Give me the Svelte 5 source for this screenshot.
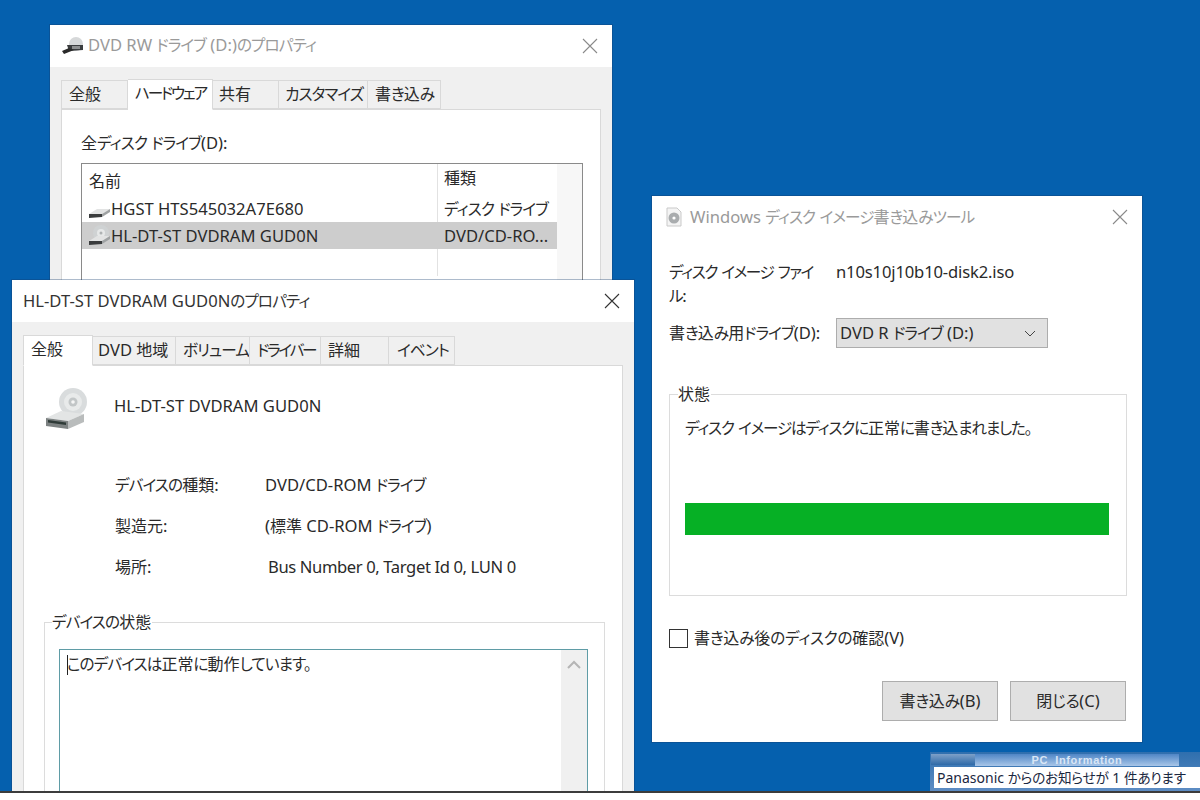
<script>
  const tabs1 = [
    { label: '全般', w: 67, pad: 7 },
    { label: 'ハードウェア', w: 85, pad: 7, tight: true },
    { label: '共有', w: 66, pad: 6 },
    { label: 'カスタマイズ', w: 89, pad: 6 },
    { label: '書き込み', w: 73, pad: 7 }
  ];
  const tabs2 = [
    { label: '全般', w: 70, pad: 7 },
    { label: 'DVD 地域', w: 83, pad: 5 },
    { label: 'ボリューム', w: 74, pad: 7 },
    { label: 'ドライバー', w: 71, pad: 7, tight: true },
    { label: '詳細', w: 68, pad: 7 },
    { label: 'イベント', w: 66, pad: 8 }
  ];

  // Split a mixed string so that Latin, kana and kanji runs can be sized apart.
  function runs(text) {
    return text.match(/[\x00-\x7f]+|[\u4e00-\u9fff]+|[^\x00-\x7f\u4e00-\u9fff]+/g) ?? [];
  }
  function runClass(run) {
    const code = run.charCodeAt(0);
    if (code < 128) return 'la';
    return code >= 0x4e00 && code <= 0x9fff ? 'kj' : 'kn';
  }
</script>

{#snippet txt(s)}
  {#each runs(s) as r}<span class={runClass(r)}>{r}</span>{/each}
{/snippet}

{#snippet bigDrive()}
  <svg class="ico" width="46" height="46" viewBox="0 0 46 46" aria-hidden="true">
    <circle cx="29" cy="15" r="14" fill="#d9dcdd" />
    <circle cx="29" cy="15" r="9" fill="#e8eaea" />
    <circle cx="29" cy="15" r="4.5" fill="#c2c6c7" />
    <circle cx="29" cy="15" r="1.8" fill="#f6f6f6" />
    <path d="M2 31 L17 24 L40 27 L24 34 Z" fill="#e3e5e5" />
    <path d="M2 31 L24 34 V42 L2 39 Z" fill="#7d8282" />
    <path d="M4 33 L22 35.5 V38 L4 35.5 Z" fill="#2f3b38" />
    <path d="M24 34 L40 27 V35 L24 42 Z" fill="#b9bcbc" />
  </svg>
{/snippet}

{#snippet smallDrive(disc)}
  <svg class="ico" width="24" height="24" viewBox="0 0 24 24" aria-hidden="true">
    {#if disc}
      <circle cx="14" cy="9" r="8" fill="#cfd2d3" />
      <circle cx="14" cy="9" r="4" fill="#e6e8e8" />
      <circle cx="14" cy="9" r="1.5" fill="#aeb2b3" />
    {/if}
    <path d="M2 17 L10 12 L23 12 L15 17 Z" fill="#e2e3e3" />
    <path d="M2 17 H15 V20 L2 21 Z" fill="#3a3c3d" />
    <path d="M15 17 L23 12 V15 L15 20 Z" fill="#9fa2a3" />
  </svg>
{/snippet}

{#snippet closeX()}
  <svg class="close" width="16" height="16" viewBox="0 0 16 16" aria-hidden="true">
    <path d="M1 1 L15 15 M15 1 L1 15" stroke="currentColor" stroke-width="1.1" fill="none" />
  </svg>
{/snippet}

<main class="desktop">
  <section class="win win1">
    <header class="title inactive">
      <svg class="ico" width="24" height="20" viewBox="0 0 24 20" aria-hidden="true">
        <circle cx="15" cy="8" r="7" fill="#d6d8d9" />
        <path d="M6 9 H22 V14 L8 15 Z" fill="#3a3c3e" />
        <rect x="11" y="10" width="8" height="3" fill="#8d8f90" />
        <path d="M1 15 L8 12 L13 14 L3 18 Z" fill="#2a2a2a" />
      </svg>
      <span class="tt">{@render txt('DVD RW ドライブ (D:)のプロパティ')}</span>
      {@render closeX()}
    </header>
    <div class="body b1">
      <div class="tabs t1">
        {#each tabs1 as t, i}
          <span class="tab" class:on={i === 1} class:tight={t.tight} style="width:{t.w}px;padding-left:{t.pad}px">{@render txt(t.label)}</span>
        {/each}
      </div>
      <div class="panel p1">
        <div class="lbl1">{@render txt('全ディスク ドライブ(D):')}</div>
        <div class="list">
          <div class="list-main">
            <div class="lrow head"><span class="c1">{@render txt('名前')}</span><span class="c2">{@render txt('種類')}</span></div>
            <div class="lrow"><span class="c1 named">{@render smallDrive(false)}<span class="nm">{@render txt('HGST HTS545032A7E680')}</span></span><span class="c2">{@render txt('ディスク ドライブ')}</span></div>
            <div class="lrow sel"><span class="c1 named">{@render smallDrive(true)}<span class="nm">{@render txt('HL-DT-ST DVDRAM GUD0N')}</span></span><span class="c2">{@render txt('DVD/CD-RO...')}</span></div>
            <div class="lrow"><span class="c1"></span><span class="c2"></span></div>
          </div>
          <div class="list-sb"></div>
        </div>
      </div>
    </div>
  </section>

  <section class="win win2">
    <header class="title">
      <span class="tt">{@render txt('HL-DT-ST DVDRAM GUD0Nのプロパティ')}</span>
      {@render closeX()}
    </header>
    <div class="body b2">
      <div class="tabs t2">
        {#each tabs2 as t, i}
          <span class="tab" class:on={i === 0} class:tight={t.tight} style="width:{t.w}px;padding-left:{t.pad}px">{@render txt(t.label)}</span>
        {/each}
      </div>
      <div class="panel p2">
        <div class="dev-head">
          {@render bigDrive()}
          <span class="dev-name">{@render txt('HL-DT-ST DVDRAM GUD0N')}</span>
        </div>
        <dl class="props">
          <dt>{@render txt('デバイスの種類:')}</dt><dd>{@render txt('DVD/CD-ROM ドライブ')}</dd>
          <dt>{@render txt('製造元:')}</dt><dd>{@render txt('(標準 CD-ROM ドライブ)')}</dd>
          <dt>{@render txt('場所:')}</dt><dd class="nudge">{@render txt('Bus Number 0, Target Id 0, LUN 0')}</dd>
        </dl>
        <fieldset class="status">
          <legend>{@render txt('デバイスの状態')}</legend>
          <div class="tb">
            <div class="tb-text"><i class="caret"></i>{@render txt('このデバイスは正常に動作しています。')}</div>
            <div class="tb-sb">
              <svg width="14" height="9" viewBox="0 0 14 9" aria-hidden="true"><path d="M1 8 L7 2 L13 8" stroke="#b5b5b5" stroke-width="2" fill="none" /></svg>
            </div>
          </div>
        </fieldset>
      </div>
    </div>
  </section>

  <section class="win win3">
    <header class="title inactive">
      <svg class="ico" width="18" height="20" viewBox="0 0 18 20" aria-hidden="true">
        <path d="M2 1 H12 L16 5 V19 H2 Z" fill="#f4f4f4" stroke="#c9c9c9" />
        <circle cx="9" cy="11" r="5.5" fill="#a9acae" />
        <circle cx="9" cy="11" r="1.6" fill="#fff" />
      </svg>
      <span class="tt">{@render txt('Windows ディスク イメージ書き込みツール')}</span>
      {@render closeX()}
    </header>
    <div class="b3">
      <div class="form-row file">
        <span class="fl">{@render txt('ディスク イメージ ファイ')}<br />{@render txt('ル:')}</span>
        <span class="fv">{@render txt('n10s10j10b10-disk2.iso')}</span>
      </div>
      <div class="form-row drive">
        <span class="fl">{@render txt('書き込み用ドライブ(D):')}</span>
        <div class="select">
          <span>{@render txt('DVD R ドライブ (D:)')}</span>
          <svg width="12" height="7" viewBox="0 0 12 7" aria-hidden="true"><path d="M1 1 L6 6 L11 1" stroke="#444" stroke-width="1" fill="none" /></svg>
        </div>
      </div>
      <fieldset class="state">
        <legend>{@render txt('状態')}</legend>
        <div class="msg">{@render txt('ディスク イメージはディスクに正常に書き込まれました。')}</div>
        <div class="bar"></div>
      </fieldset>
      <div class="verify"><i class="check"></i><span>{@render txt('書き込み後のディスクの確認(V)')}</span></div>
      <div class="buttons">
        <button type="button">{@render txt('書き込み(B)')}</button>
        <button type="button">{@render txt('閉じる(C)')}</button>
      </div>
    </div>
  </section>

  <aside class="tray">
    <div class="tray-head"><i class="seg dark"></i><span class="tray-title">PC&nbsp;&nbsp;Information</span><i class="seg light"></i></div>
    <div class="tray-msg">Panasonic <span class="kn">からのお知らせが</span> 1 <span class="kn">件あります</span></div>
  </aside>

  <div class="floor"></div>
</main>

<style>
  :global(body) {
    margin: 0;
    overflow: hidden;
  }
  .desktop {
    position: relative;
    width: 1200px;
    height: 800px;
    overflow: hidden;
    background: #0560ae;
    font-family: "Noto Sans", "Noto Sans CJK JP", sans-serif;
    font-size: 16px;
    color: #2a2a2a;
  }
  .la { font-size: 16.6px; line-height: 1; }
  .kn, .kj {
    font-family: "Noto Sans CJK JP", sans-serif;
    font-feature-settings: "palt";
    line-height: 1;
  }
  .kn { font-size: 15.6px; letter-spacing: -0.9px; }
  .kj { font-size: 16px; }
  .floor {
    position: absolute;
    left: 0;
    right: 0;
    top: 791px;
    height: 9px;
    background: #fff;
    border-top: 2px solid #3c3c3c;
    box-sizing: border-box;
    z-index: 5;
  }
  .win {
    position: absolute;
    background: #fff;
    box-sizing: border-box;
    box-shadow: 0 0 0 1px rgba(20, 60, 110, 0.35);
    overflow: hidden;
  }
  .win1 { left: 50px; top: 25px; width: 562px; height: 300px; z-index: 1; }
  .win2 { left: 12px; top: 280px; width: 622px; height: 520px; z-index: 2; }
  .win3 { left: 652px; top: 196px; width: 490px; height: 546px; z-index: 2; }

  .title {
    display: flex;
    align-items: center;
    box-sizing: border-box;
    height: 42px;
    padding: 0 14px 0 11px;
    gap: 3px;
    background: #fff;
    color: #333;
  }
  .title.inactive { color: #9a9a9a; }
  .tt { flex: 1; white-space: nowrap; line-height: 20px; }
  .win1 .tt { margin-top: -2px; }
  .win3 .title { padding-left: 13px; padding-right: 14px; gap: 7px; }
  .close { color: #8a8a8a; flex: none; }
  .win2 .close { color: #333; }
  .ico { flex: none; display: block; }

  .body { background: #f0f0f0; box-sizing: border-box; }
  .b1 { padding: 12px 11px 0; height: 258px; }
  .b2 { padding: 13px 11px 0; height: 478px; }

  .tabs { display: flex; align-items: flex-end; }
  .tab {
    box-sizing: border-box;
    display: block;
    height: 29px;
    line-height: 27px;
    background: #f0f0f0;
    border: 1px solid #d9d9d9;
    border-left-width: 0;
    white-space: nowrap;
    position: relative;
    overflow: hidden;
  }
  .tab:first-child { border-left-width: 1px; }
  .tab.tight .kn { letter-spacing: -2.2px; }
  .tab.on {
    background: #fff;
    height: 31px;
    margin-bottom: -1px;
    border-bottom-color: #fff;
    z-index: 1;
  }
  .panel {
    background: #fff;
    border: 1px solid #d9d9d9;
    box-sizing: border-box;
  }
  .p1 { width: 540px; height: 240px; padding: 23px 18px 0 19px; }
  .lbl1 { line-height: 20px; margin-bottom: 10px; }
  .list {
    display: flex;
    width: 502px;
    height: 160px;
    box-sizing: border-box;
    border: 1px solid #8a8a8a;
  }
  .list-main { width: 475px; flex: none; }
  .list-sb { flex: 1; background: #f7f7f7; }
  .lrow { display: flex; height: 27px; line-height: 27px; white-space: nowrap; }
  .lrow.head { height: 31px; line-height: 30px; }
  .lrow.sel { background: #cdcdcd; }
  .c1 {
    box-sizing: border-box;
    flex: none;
    width: 356px;
    padding-left: 7px;
    border-right: 1px solid #e2e2e2;
    display: flex;
    align-items: center;
    white-space: pre;
  }
  .lrow.sel .c1 { border-right-color: #cdcdcd; }
  .named { padding-left: 5px; }
  .nm { margin-top: 2px; }
  .c2 { padding-left: 6px; flex: 1; min-width: 0; overflow: hidden; line-height: 28px; }

  .p2 { width: 600px; height: 440px; padding: 0 17px 0 20px; }
  .dev-head {
    display: flex;
    align-items: flex-start;
    gap: 24px;
    height: 46px;
    margin-top: 21px;
    margin-bottom: 42px;
  }
  .dev-name { white-space: nowrap; line-height: 20px; margin-top: 9px; }
  .props {
    display: grid;
    grid-template-columns: 150px 1fr;
    grid-auto-rows: 41px;
    margin: 0 0 0 71px;
    line-height: 20px;
    align-items: start;
  }
  .props dt, .props dd { margin: 0; white-space: nowrap; }
  .nudge { padding-left: 3px; letter-spacing: -0.38px; }
  fieldset { margin: 0; min-width: 0; border: 1px solid #dcdcdc; }
  .status {
    margin-top: 14px;
    padding: 17px 16px 0 14px;
    height: 200px;
    box-sizing: border-box;
    width: 561px;
  }
  legend { padding: 0 1px 0 0; line-height: 20px; margin-left: -7px; }
  .tb {
    display: flex;
    height: 180px;
    box-sizing: border-box;
    border: 1px solid #5f9ca6;
  }
  .tb-text {
    flex: 1;
    padding: 4px 0 0 7px;
    line-height: 20px;
    position: relative;
  }
  .caret {
    position: absolute;
    left: 7px;
    top: 5px;
    width: 1px;
    height: 20px;
    background: #222;
  }
  .tb-sb {
    width: 26px;
    background: #f0f0f0;
    display: flex;
    justify-content: center;
    padding-top: 10px;
    box-sizing: border-box;
  }
  .tb-sb svg { display: block; }

  .b3 { padding: 0 15px 0 17px; }
  .form-row { display: flex; }
  .fl { width: 167px; flex: none; line-height: 24px; }
  .file { margin-top: 22px; height: 57px; gap: 17px; }
  .file .fl { width: 150px; white-space: nowrap; }
  .file .fl .kn { letter-spacing: -1.4px; }
  .fv { line-height: 24px; white-space: nowrap; letter-spacing: -0.15px; }
  .drive { align-items: center; height: 30px; margin-top: 1px; }
  .drive .fl { white-space: nowrap; }
  .select {
    box-sizing: border-box;
    width: 212px;
    height: 30px;
    background: #e1e1e1;
    border: 1px solid #adadad;
    display: flex;
    align-items: center;
    justify-content: space-between;
    padding: 0 11px 0 3px;
    white-space: nowrap;
  }
  .state {
    box-sizing: border-box;
    width: 458px;
    height: 212px;
    margin-top: 36px;
    padding: 14px 16px 0 15px;
  }
  .msg { line-height: 20px; white-space: nowrap; }
  .msg .kn { letter-spacing: -1.2px; }
  .bar { height: 32px; background: #06b025; margin-top: 65px; width: 424px; }
  .verify { display: flex; align-items: center; gap: 6px; margin-top: 32px; height: 20px; }
  .verify .kn { letter-spacing: -0.3px; }
  .check {
    display: block;
    box-sizing: border-box;
    width: 19px;
    height: 19px;
    border: 1px solid #333;
    background: #fff;
  }
  .buttons {
    display: flex;
    justify-content: flex-end;
    gap: 12px;
    margin-top: 33px;
    padding-right: 1px;
  }
  button {
    box-sizing: border-box;
    width: 116px;
    height: 40px;
    padding: 0;
    background: #e1e1e1;
    border: 1px solid #adadad;
    font: inherit;
    color: inherit;
  }
  button .kn { letter-spacing: -0.3px; }

  .tray {
    position: absolute;
    left: 930px;
    top: 752px;
    width: 270px;
    height: 39px;
    z-index: 3;
    background: linear-gradient(#2f6fae, #5e8dc4);
  }
  .tray-head {
    position: relative;
    display: flex;
    height: 13px;
    padding-top: 2px;
    box-sizing: content-box;
  }
  .seg { display: block; height: 11px; }
  .seg.dark { width: 44px; margin-left: 1px; background: linear-gradient(#7da0c8, #2f6aa8); }
  .seg.light { flex: 1; margin-left: 0; }
  .tray-title {
    width: 204px;
    height: 12px;
    background: linear-gradient(#4f86c6, #a9c6e8);
    text-align: center;
    font-family: "Liberation Sans", sans-serif;
    font-weight: 700;
    font-size: 11px;
    line-height: 13px;
    color: #d9e6f6;
    letter-spacing: 0.6px;
    white-space: nowrap;
    overflow: hidden;
  }
  .tray-msg {
    box-sizing: border-box;
    height: 21px;
    margin: 0 0 0 4px;
    padding-left: 3px;
    background: #fff;
    color: #1a2740;
    font-size: 14px;
    line-height: 21px;
    white-space: nowrap;
  }
  .tray-msg .kn { font-size: 13.6px; letter-spacing: -0.2px; }
</style>
